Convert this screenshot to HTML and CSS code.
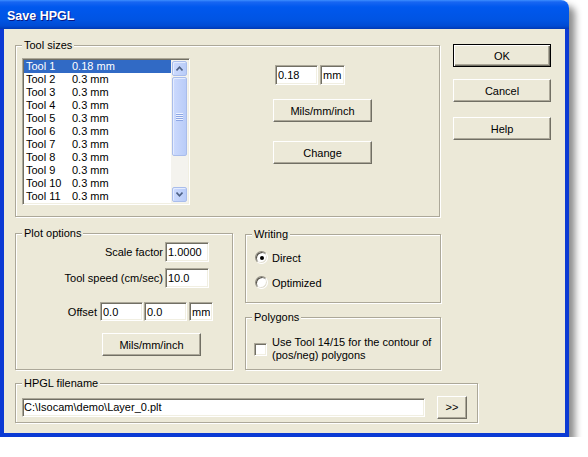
FILE: index.html
```html
<!DOCTYPE html>
<html lang="en">
<head>
    <meta charset="UTF-8">
    <meta name="viewport" content="width=device-width, initial-scale=1.0">
    <title>Save HPGL</title>
    <link rel="stylesheet" href="styles.css">
</head>
<body>
    <div class="window">
        <div class="titlebar">Save HPGL</div>
        <div class="client">
            <div class="top-row">
                <div class="group tool-group">
                    <span class="group-title">Tool sizes</span>
                    <div class="listbox">
                        <ul class="tool-list">
                            <li class="selected"><span class="tool-name">Tool 1</span>0.18 mm</li>
                            <li><span class="tool-name">Tool 2</span>0.3 mm</li>
                            <li><span class="tool-name">Tool 3</span>0.3 mm</li>
                            <li><span class="tool-name">Tool 4</span>0.3 mm</li>
                            <li><span class="tool-name">Tool 5</span>0.3 mm</li>
                            <li><span class="tool-name">Tool 6</span>0.3 mm</li>
                            <li><span class="tool-name">Tool 7</span>0.3 mm</li>
                            <li><span class="tool-name">Tool 8</span>0.3 mm</li>
                            <li><span class="tool-name">Tool 9</span>0.3 mm</li>
                            <li><span class="tool-name">Tool 10</span>0.3 mm</li>
                            <li><span class="tool-name">Tool 11</span>0.3 mm</li>
                        </ul>
                        <div class="scrollbar">
                            <div class="scroll-btn">
                                <svg width="7" height="5" viewBox="0 0 7 5"><polyline points="0.5,4.5 3.5,1.2 6.5,4.5" fill="none" stroke="#4D6185" stroke-width="1.6"/></svg>
                            </div>
                            <div class="scroll-thumb"><span class="grip"></span></div>
                            <div class="scroll-track"></div>
                            <div class="scroll-btn">
                                <svg width="7" height="5" viewBox="0 0 7 5"><polyline points="0.5,0.5 3.5,3.8 6.5,0.5" fill="none" stroke="#4D6185" stroke-width="1.6"/></svg>
                            </div>
                        </div>
                    </div>
                    <div class="tool-controls">
                        <div class="size-row">
                            <input class="edit size-edit" type="text" value="0.18">
                            <input class="edit unit-edit" type="text" value="mm">
                        </div>
                        <button class="btn wide-btn units-btn">Mils/mm/inch</button>
                        <button class="btn wide-btn change-btn">Change</button>
                    </div>
                </div>
                <div class="side-buttons">
                    <button class="btn side-btn default">OK</button>
                    <button class="btn side-btn cancel-btn">Cancel</button>
                    <button class="btn side-btn help-btn">Help</button>
                </div>
            </div>

            <div class="middle-row">
                <div class="group plot-group">
                    <span class="group-title">Plot options</span>
                    <div class="field-row">
                        <label class="field-label scale-label">Scale factor</label>
                        <input class="edit num-edit" type="text" value="1.0000">
                    </div>
                    <div class="field-row speed-row">
                        <label class="field-label scale-label">Tool speed (cm/sec)</label>
                        <input class="edit num-edit" type="text" value="10.0">
                    </div>
                    <div class="field-row offset-row">
                        <label class="field-label offset-label">Offset</label>
                        <input class="edit offset-edit" type="text" value="0.0">
                        <input class="edit offset-edit second" type="text" value="0.0">
                        <input class="edit offset-unit" type="text" value="mm">
                    </div>
                    <button class="btn wide-btn plot-units-btn">Mils/mm/inch</button>
                </div>

                <div class="right-stack">
                    <div class="group writing-group">
                        <span class="group-title">Writing</span>
                        <div class="option-row">
                            <span class="radio checked"></span>
                            <span>Direct</span>
                        </div>
                        <div class="option-row second">
                            <span class="radio"></span>
                            <span>Optimized</span>
                        </div>
                    </div>
                    <div class="group polygon-group">
                        <span class="group-title">Polygons</span>
                        <div class="check-row">
                            <span class="checkbox"></span>
                            <span class="check-text">Use Tool 14/15 for the contour of<br>(pos/neg) polygons</span>
                        </div>
                    </div>
                </div>
            </div>

            <div class="group file-group">
                <span class="group-title">HPGL filename</span>
                <input class="edit file-edit" type="text" value="C:\Isocam\demo\Layer_0.plt">
                <button class="btn browse-btn">&gt;&gt;</button>
            </div>
        </div>
    </div>
</body>
</html>
```

FILE: styles.css
```css
* {
    box-sizing: border-box;
}
body {
    margin: 0;
    background: #fff;
    font-family: "Liberation Sans", Arial, sans-serif;
    font-size: 11px;
    color: #000;
}
.window {
    width: 569px;
    height: 437px;
    display: flex;
    flex-direction: column;
    border-radius: 0 8px 0 0;
    box-shadow: 6px 6px 7px rgba(0, 0, 0, 0.45);
}
.titlebar {
    height: 29px;
    flex: none;
    padding: 9px 0 0 7px;
    border-radius: 0 8px 0 0;
    background: linear-gradient(to bottom, #3D8EFF 0, #1866F2 2px, #0058EE 7px, #0054E3 20px, #004BD4 26px, #0039B4 29px);
    color: #fff;
    font-weight: bold;
    font-size: 12.5px;
    line-height: 14px;
    text-shadow: 1px 1px #0A1883;
}
.client {
    flex: 1;
    background: #ECE9D8;
    border: 4px solid #0B3AD4;
    border-top: 0;
    padding: 16px 0 0 11px;
}

/* group boxes */
.group {
    position: relative;
    border: 1px solid #ACA899;
    box-shadow: inset 1px 1px #fff, 1px 1px #fff;
}
.group-title {
    position: absolute;
    top: -7px;
    left: 6px;
    padding: 0 2px;
    line-height: 13px;
    background: #ECE9D8;
}

/* sunken edit fields */
.edit {
    font: inherit;
    color: #000;
    background: #fff;
    padding: 0 2px;
    margin: 0;
    border: 1px solid;
    border-color: #ACA899 #fff #fff #ACA899;
    box-shadow: inset 1px 1px #716F64, inset -1px -1px #F1EFE2;
    height: 20px;
    outline: none;
}

/* raised push buttons */
.btn {
    font: inherit;
    color: #000;
    background: #ECE9D8;
    padding: 0;
    margin: 0;
    height: 23px;
    border: 1px solid;
    border-color: #fff #716F64 #716F64 #fff;
    box-shadow: inset -1px -1px #ACA899;
}
.btn.default {
    border: 1px solid #000;
    box-shadow: inset 1px 1px #fff, inset -1px -1px #716F64, inset -2px -2px #ACA899;
}

.top-row {
    display: flex;
    align-items: flex-start;
}
.tool-group {
    width: 425px;
    height: 172px;
    display: flex;
    align-items: flex-start;
    padding: 12px 0 0 6px;
}
.listbox {
    width: 168px;
    height: 147px;
    display: flex;
    padding: 1px;
    border: 1px solid;
    border-color: #ACA899 #fff #fff #ACA899;
    box-shadow: inset 1px 1px #716F64, inset -1px -1px #F1EFE2;
    background: #fff;
}
.tool-list {
    list-style: none;
    margin: 0;
    padding: 0;
    flex: 1;
}
.tool-list li {
    height: 13px;
    line-height: 13px;
    padding-left: 2px;
    white-space: nowrap;
}
.tool-list li.selected {
    background: #316AC5;
    color: #fff;
}
.tool-name {
    display: inline-block;
    width: 46px;
}
.scrollbar {
    width: 17px;
    flex: none;
    display: flex;
    flex-direction: column;
    background: #F4F3EE;
}
.scroll-btn,
.scroll-thumb {
    margin: 1px;
    border: 1px solid #A9BDEB;
    border-radius: 2px;
    background: linear-gradient(to right, #CCDAFD, #B9CCF8);
    box-shadow: inset 1px 1px #E4ECFF;
    display: flex;
    align-items: center;
    justify-content: center;
}
.scroll-btn {
    height: 15px;
    flex: none;
}
.scroll-thumb {
    height: 79px;
    margin-top: 0;
    flex: none;
}
.scroll-track {
    flex: 1;
}
.grip {
    width: 7px;
    height: 8px;
    background: repeating-linear-gradient(to bottom, #EEF3FF 0 1px, #8CA6E4 1px 2px);
}
.tool-controls {
    margin-left: 83px;
    padding-top: 7px;
    display: flex;
    flex-direction: column;
    align-items: flex-start;
}
.size-row {
    display: flex;
    gap: 2px;
    padding-left: 2px;
}
.size-edit {
    width: 43px;
}
.unit-edit {
    width: 25px;
}
.wide-btn {
    width: 99px;
}
.units-btn {
    margin-top: 14px;
}
.change-btn {
    margin-top: 19px;
}
.side-buttons {
    display: flex;
    flex-direction: column;
    margin: -1px 0 0 13px;
}
.side-btn {
    width: 98px;
}
.cancel-btn {
    margin-top: 12px;
}
.help-btn {
    margin-top: 15px;
}

.middle-row {
    display: flex;
    align-items: flex-start;
    margin-top: 16px;
}
.plot-group {
    width: 218px;
    height: 137px;
    padding-top: 8px;
}
.field-row {
    display: flex;
    align-items: center;
}
.field-label {
    text-align: right;
    white-space: nowrap;
}
.scale-label {
    width: 147px;
}
.num-edit {
    width: 44px;
    margin-left: 2px;
}
.speed-row {
    margin-top: 6px;
}
.offset-row {
    margin-top: 14px;
}
.offset-label {
    width: 81px;
}
.offset-row .edit {
    height: 19px;
}
.offset-edit {
    width: 43px;
    margin-left: 3px;
}
.offset-edit.second {
    margin-left: 1px;
}
.offset-unit {
    width: 24px;
    margin-left: 2px;
}
.plot-units-btn {
    margin: 12px 0 0 86px;
}

.right-stack {
    width: 196px;
    margin-left: 12px;
    display: flex;
    flex-direction: column;
}
.writing-group {
    height: 69px;
    margin-top: 1px;
    padding: 16px 0 0 9px;
}
.option-row {
    display: flex;
    align-items: center;
    gap: 4px;
    height: 13px;
}
.option-row.second {
    margin-top: 12px;
}
.radio {
    position: relative;
    width: 13px;
    height: 13px;
    border-radius: 50%;
    background: #fff;
    border: 1px solid;
    border-color: #8F8C80 #fff #fff #8F8C80;
    box-shadow: inset 1px 1px #55534A, inset -1px -1px #E2DFD2;
}
.radio.checked::after {
    content: "";
    position: absolute;
    left: 3.5px;
    top: 3.5px;
    width: 4px;
    height: 4px;
    border-radius: 50%;
    background: #000;
}
.polygon-group {
    height: 53px;
    margin-top: 14px;
    padding: 18px 0 0 8px;
}
.check-row {
    display: flex;
    align-items: center;
    gap: 5px;
}
.checkbox {
    width: 13px;
    height: 13px;
    flex: none;
    background: #fff;
    border: 1px solid;
    border-color: #ACA899 #fff #fff #ACA899;
    box-shadow: inset 1px 1px #716F64, inset -1px -1px #F1EFE2;
}
.check-text {
    line-height: 13px;
}

.file-group {
    width: 463px;
    height: 40px;
    margin-top: 13px;
    padding: 8px 0 0 6px;
    display: flex;
    align-items: center;
}
.file-edit {
    width: 403px;
    height: 19px;
    padding-left: 1px;
}
.browse-btn {
    width: 30px;
    margin-left: 12px;
}
```
